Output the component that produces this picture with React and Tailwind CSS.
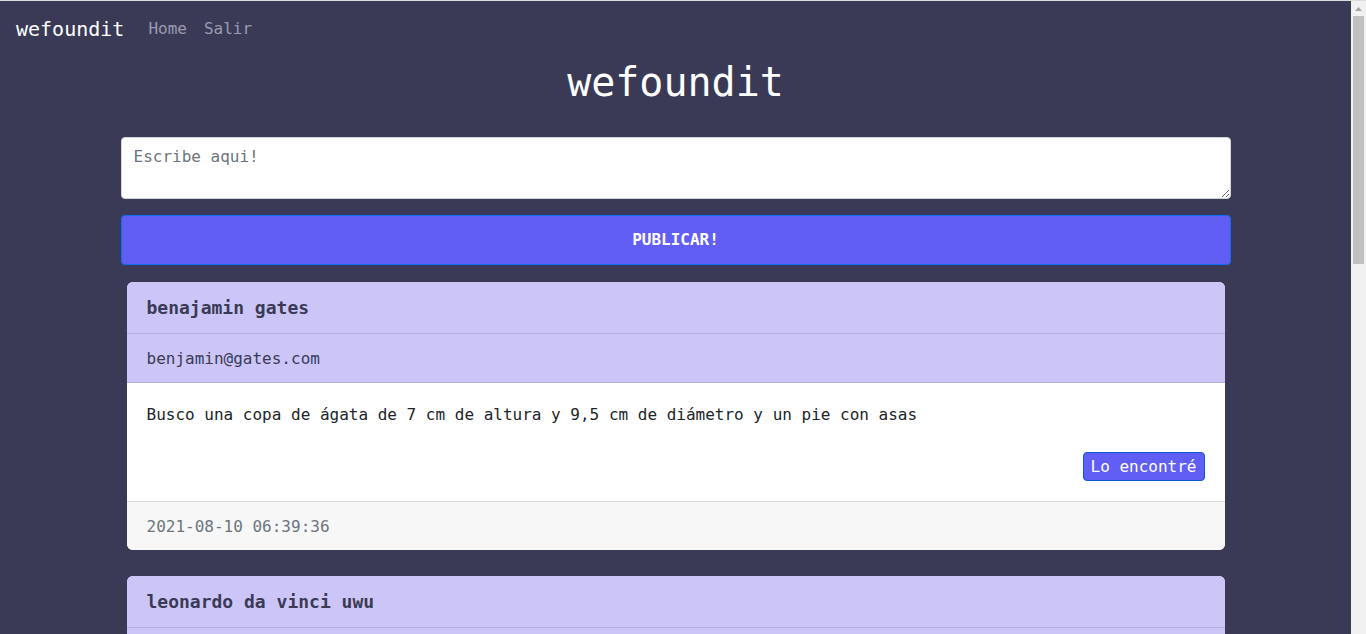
const posts = [
  {
    id: 1,
    name: "benajamin gates",
    email: "benjamin@gates.com",
    text: "Busco una copa de ágata de 7 cm de altura y 9,5 cm de diámetro y un pie con asas",
    date: "2021-08-10 06:39:36",
  },
  {
    id: 2,
    name: "leonardo da vinci uwu",
    email: "leonardo@davinci.com",
    text: "Perdí mi cuaderno de bocetos en el parque",
    date: "2021-08-09 18:12:04",
  },
];

const PostCard = ({ post }) => (
  <div className="mx-[6px] mb-[26px] rounded-[6px] overflow-hidden bg-white">
    <div className="bg-[#cbc6f7] h-[52px] flex items-center px-5 border-b border-[#b3aee0]">
      <h5 className="text-[18px] font-bold text-[#3b3a56]">{post.name}</h5>
    </div>
    <div className="bg-[#cbc6f7] h-[49px] flex items-center px-5 border-b border-[#b3aee0]">
      <p className="text-[16px] text-[#3b3a56] pt-[2px]">{post.email}</p>
    </div>
    <div className="px-5 pt-5 pb-5">
      <p className="text-[16px] leading-6 text-[#212529]">{post.text}</p>
      <div className="flex justify-end mt-[25px]">
        <button className="h-[29px] px-[7px] rounded-[4px] bg-[#615ef5] border border-[#0a58ca] text-white text-[16px] leading-none">
          Lo encontré
        </button>
      </div>
    </div>
    <div className="bg-[#f7f7f7] border-t border-[#dcdcdc] h-[49px] flex items-center px-5">
      <span className="text-[16px] text-[#6c757d] pt-[2px]">{post.date}</span>
    </div>
  </div>
);

// fake page scrollbar, the reference shows one
const Scrollbar = () => (
  <div className="w-[15px] shrink-0 bg-[#f1f1f1] flex flex-col items-center">
    <svg width="15" height="15" viewBox="0 0 15 15" className="shrink-0">
      <path d="M4 10 L7.5 6 L11 10 Z" fill="#a3a3a3" />
    </svg>
    <div className="w-[11px] h-[248px] bg-[#c1c1c1]" />
  </div>
);

export default function App() {
  return (
    <div className="h-screen flex overflow-hidden border-t border-[#dcdcdc] font-['DejaVu_Sans_Mono',monospace]">
      <div className="flex-1 bg-[#3b3a56] overflow-hidden">
        <nav className="h-[56px] flex items-center px-4 gap-6">
          <span className="text-white text-[20px]">wefoundit</span>
          <div className="flex gap-[17px] text-[16px] text-[#9a9ab0]">
            <a href="#">Home</a>
            <a href="#">Salir</a>
          </div>
        </nav>
        <h1 className="text-white text-[40px] leading-[48px] text-center mt-[1px]">wefoundit</h1>
        <div className="w-[1110px] mx-auto mt-[31px] pb-10">
          <textarea
            placeholder="Escribe aqui!"
            className="block w-full h-[62px] rounded-[4px] bg-white border border-[#ced4da] px-3 py-[7px] text-[16px] text-[#212529] placeholder:text-[#6c757d]"
          />
          <button className="block w-full h-[50px] mt-4 rounded-[4px] bg-[#615ef5] border border-[#0d6efd] text-white font-bold text-[16px]">
            PUBLICAR!
          </button>
          <div className="mt-[17px]">
            {posts.map((p) => (
              <PostCard key={p.id} post={p} />
            ))}
          </div>
        </div>
      </div>
      <Scrollbar />
    </div>
  );
}
